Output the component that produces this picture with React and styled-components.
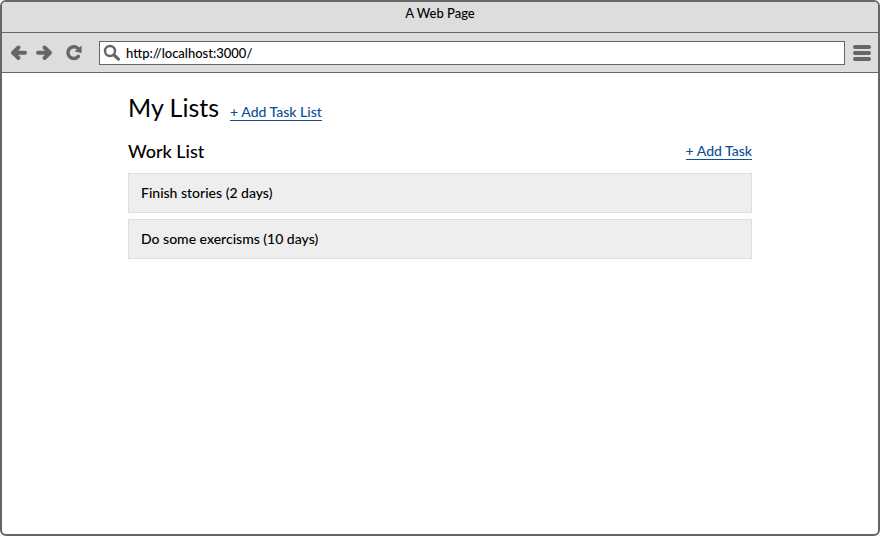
import React from "react";
import styled, { createGlobalStyle } from "styled-components";

const GlobalStyle = createGlobalStyle`
  *, *::before, *::after { box-sizing: border-box; }
  body {
    margin: 0;
    background: #fff;
    color: #000;
    font: 500 13px/20px Lato, sans-serif;
  }
`;

const Browser = styled.div`
  display: flex;
  flex-direction: column;
  min-height: 100vh;
  border: 2px solid #666;
  border-radius: 6px;
  overflow: hidden;
`;

const TitleBar = styled.header`
  height: 31px;
  padding-top: 1px;
  background: #ddd;
  border-bottom: 1px solid #666;
  text-align: center;
`;

const Toolbar = styled.form`
  display: flex;
  align-items: center;
  height: 40px;
  padding: 0 7px 0 8px;
  background: #ddd;
  border-bottom: 1px solid #666;
`;

const IconButton = styled.button`
  display: flex;
  flex: none;
  margin: 0 ${(p) => p.$gap || 0}px 0 0;
  padding: 0;
  border: 0;
  background: none;
  color: #666;
  cursor: pointer;
`;

const AddressBar = styled.label`
  display: flex;
  flex: 1;
  align-items: center;
  min-width: 0;
  height: 24px;
  margin-right: 8px;
  padding-left: 3px;
  gap: 5px;
  border: 1px solid #666;
  background: #fff;
  color: #666;
`;

const AddressInput = styled.input`
  flex: 1;
  min-width: 0;
  padding: 0;
  border: 0;
  outline: 0;
  background: none;
  color: #000;
  font: inherit;
`;

const Page = styled.main`
  width: 100%;
  max-width: 640px;
  margin: 0 auto;
  padding: 18px 8px;
`;

const PageHeader = styled.div`
  display: flex;
  align-items: baseline;
  gap: 11px;
`;

const PageTitle = styled.h1`
  margin: 0;
  font-size: 25px;
  font-weight: 400;
  line-height: 32px;
`;

const ListHeader = styled.div`
  display: flex;
  align-items: center;
  justify-content: space-between;
  margin: 16px 0 10px;
`;

const ListTitle = styled.h2`
  margin: 0;
  font-size: 18px;
  font-weight: 500;
  line-height: 24px;
`;

const ActionLink = styled.a`
  color: #0b4f96;
  font-size: 14px;
  line-height: 16px;
  text-decoration: none;
  border-bottom: 1px solid currentColor;
`;

const TaskList = styled.ul`
  display: grid;
  gap: 6px;
  margin: 0;
  padding: 0;
  list-style: none;
`;

const Task = styled.li`
  padding: 9px 12px;
  border: 1px solid #ddd;
  background: #eee;
  font-size: 14px;
`;

const Arrow = ({ d }) => (
  <svg width="18" height="18" viewBox="0 0 18 18" fill="none" stroke="currentColor" strokeWidth="4" strokeLinecap="round" strokeLinejoin="round">
    <path d={d} />
  </svg>
);

const ReloadIcon = () => (
  <svg width="18" height="18" viewBox="0 0 18 18">
    <path d="M13.4 12.4A5.9 5.9 0 1 1 12.8 4.2" fill="none" stroke="currentColor" strokeWidth="3.4" strokeLinecap="round" />
    <path d="M16.6 1.6V9L9.6 7.4Z" fill="currentColor" />
  </svg>
);

const SearchIcon = () => (
  <svg width="18" height="18" viewBox="0 0 18 18" fill="none" stroke="currentColor" strokeLinecap="round">
    <circle cx="7" cy="7" r="5" strokeWidth="2.4" />
    <path d="m11 11 4.4 4.2" strokeWidth="3.2" />
  </svg>
);

const MenuIcon = () => (
  <svg width="18" height="18" viewBox="0 0 18 18" fill="currentColor">
    <rect y="1" width="18" height="4" rx="2" />
    <rect y="7" width="18" height="4" rx="2" />
    <rect y="13" width="18" height="4" rx="2" />
  </svg>
);

const tasks = [
  { name: "Finish stories", days: 2 },
  { name: "Do some exercisms", days: 10 },
];

export default function App() {
  return (
    <Browser>
      <GlobalStyle />
      <TitleBar>A Web Page</TitleBar>
      <Toolbar onSubmit={(e) => e.preventDefault()}>
        <IconButton type="button" aria-label="Back" $gap={8}>
          <Arrow d="M8.5 3.5 3 8.8 8.5 14M3.5 8.8H15" />
        </IconButton>
        <IconButton type="button" aria-label="Forward" $gap={11}>
          <Arrow d="M8.5 3.5 14 8.8 8.5 14M13.5 8.8H2" />
        </IconButton>
        <IconButton type="button" aria-label="Reload" $gap={16}>
          <ReloadIcon />
        </IconButton>
        <AddressBar>
          <SearchIcon />
          <AddressInput aria-label="Address" defaultValue="http://localhost:3000/" />
        </AddressBar>
        <IconButton type="button" aria-label="Menu">
          <MenuIcon />
        </IconButton>
      </Toolbar>
      <Page>
        <PageHeader>
          <PageTitle>My Lists</PageTitle>
          <ActionLink href="#add-list">+ Add Task List</ActionLink>
        </PageHeader>
        <section>
          <ListHeader>
            <ListTitle>Work List</ListTitle>
            <ActionLink href="#add-task">+ Add Task</ActionLink>
          </ListHeader>
          <TaskList>
            {tasks.map((t) => (
              <Task key={t.name}>{`${t.name} (${t.days} days)`}</Task>
            ))}
          </TaskList>
        </section>
      </Page>
    </Browser>
  );
}
